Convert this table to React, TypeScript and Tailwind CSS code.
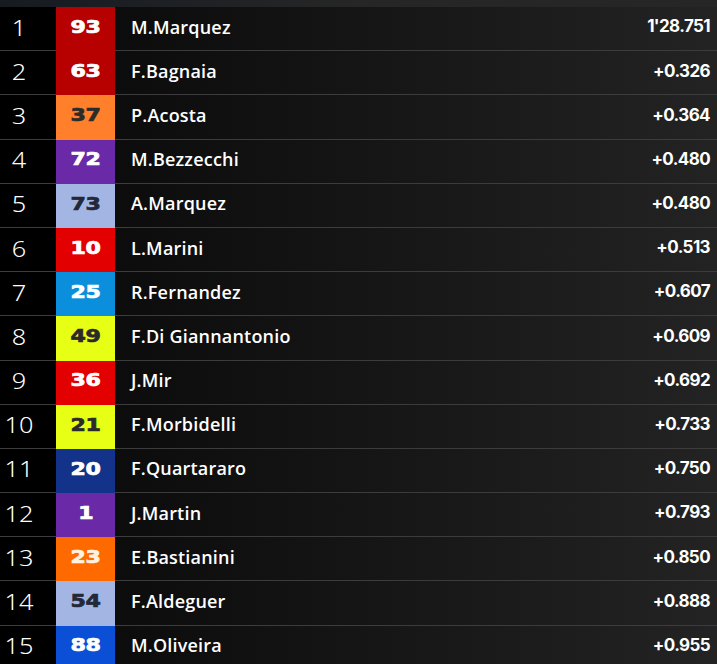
import React from 'react';

type Rider = {
  pos: number;
  num: string;
  name: string;
  time: string;
  box: string;
};

const riders: Rider[] = [
  { pos: 1, num: '93', name: 'M.Marquez', time: "1'28.751", box: 'bg-[#b70000] text-white' },
  { pos: 2, num: '63', name: 'F.Bagnaia', time: '+0.326', box: 'bg-[#b70000] text-white' },
  { pos: 3, num: '37', name: 'P.Acosta', time: '+0.364', box: 'bg-[#ff7f2a] text-[#2b2b2b]' },
  { pos: 4, num: '72', name: 'M.Bezzecchi', time: '+0.480', box: 'bg-[#6a2aa8] text-white' },
  { pos: 5, num: '73', name: 'A.Marquez', time: '+0.480', box: 'bg-[#a3b6e3] text-[#232838]' },
  { pos: 6, num: '10', name: 'L.Marini', time: '+0.513', box: 'bg-[#e20000] text-white' },
  { pos: 7, num: '25', name: 'R.Fernandez', time: '+0.607', box: 'bg-[#0b8fdc] text-white' },
  { pos: 8, num: '49', name: 'F.Di Giannantonio', time: '+0.609', box: 'bg-[#e6ff14] text-[#2b2b2b]' },
  { pos: 9, num: '36', name: 'J.Mir', time: '+0.692', box: 'bg-[#e20000] text-white' },
  { pos: 10, num: '21', name: 'F.Morbidelli', time: '+0.733', box: 'bg-[#e6ff14] text-[#2b2b2b]' },
  { pos: 11, num: '20', name: 'F.Quartararo', time: '+0.750', box: 'bg-[#123389] text-white' },
  { pos: 12, num: '1', name: 'J.Martin', time: '+0.793', box: 'bg-[#6a2aa8] text-white' },
  { pos: 13, num: '23', name: 'E.Bastianini', time: '+0.850', box: 'bg-[#ff6a00] text-[#fff3e0]' },
  { pos: 14, num: '54', name: 'F.Aldeguer', time: '+0.888', box: 'bg-[#a3b6e3] text-[#232838]' },
  { pos: 15, num: '88', name: 'M.Oliveira', time: '+0.955', box: 'bg-[#0b4fd6] text-white' },
];

const Row: React.FC<{ r: Rider }> = ({ r }) => (
  <div className="grid grid-cols-[56px_59px_1fr] h-[44.2px]">
    <div className="flex items-center bg-black border-b border-[#3c3c3c]">
      <span className="inline-block w-[38px] text-center scale-x-[1.15] text-white text-[22px] font-light font-['Noto_Sans',sans-serif] -mt-[3px]">
        {r.pos}
      </span>
    </div>
    <div className={`flex items-center justify-center ${r.box}`}>
      <span className="inline-block scale-x-[1.3] -mt-[3px] text-[17px] font-bold tracking-[-0.3px] font-['DejaVu_Sans',sans-serif] [-webkit-text-stroke:0.7px_currentColor]">
        {r.num}
      </span>
    </div>
    <div className="flex items-center justify-between pl-4 pr-[7px] border-b border-[#3c3c3c] bg-linear-to-r from-[#0c0c0c] to-[#232323]">
      <span className="-mt-[3px] text-white text-[18px] font-semibold font-['Open_Sans',sans-serif] tracking-[0.2px]">
        {r.name}
      </span>
      <span className="-mt-[3px] text-white text-[17px] font-bold font-['Inter',sans-serif] tracking-[-0.6px]">
        {r.time}
      </span>
    </div>
  </div>
);

export default function App() {
  return (
    <div className="w-[717px] h-[664px] overflow-hidden bg-black">
      <div className="h-[7px] bg-linear-to-r from-[#161b22] via-[#262626] to-[#262626]" />
      {riders.map((r) => (
        <Row key={r.pos} r={r} />
      ))}
    </div>
  );
}
